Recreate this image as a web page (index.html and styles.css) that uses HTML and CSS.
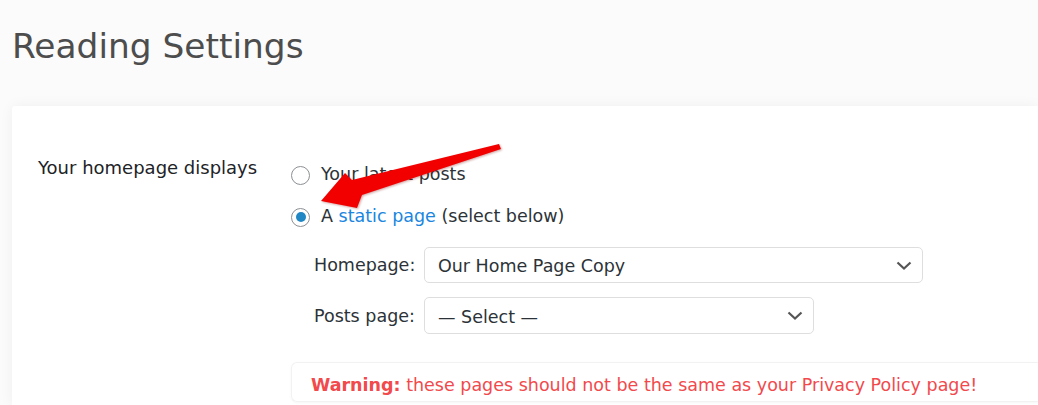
FILE: index.html
```html
<!DOCTYPE html>
<html lang="en">
<head>
<meta charset="utf-8">
<title>Reading Settings</title>
<link rel="stylesheet" href="styles.css">
</head>
<body>
<div class="page">
  <h1 class="title">Reading Settings</h1>
  <div class="card">
    <div class="row">
      <div class="row-label">Your homepage displays</div>
      <div class="row-field">
        <div class="radio"><span class="radio-dot"></span><span>Your latest posts</span></div>
        <div class="radio"><span class="radio-dot is-checked"></span><span>A <a class="link">static page</a> (select below)</span></div>
        <div class="sub">
          <div class="sub-row">
            <span class="sub-label">Homepage:</span>
            <div class="select select-wide"><span>Our Home Page Copy</span><svg class="chev" width="16" height="9" viewBox="0 0 16 9"><path d="M1.5 1.5 L8 7.5 L14.5 1.5" fill="none" stroke="#555" stroke-width="2.2"/></svg></div>
          </div>
          <div class="sub-row">
            <span class="sub-label">Posts page:</span>
            <div class="select select-narrow"><span>— Select —</span><svg class="chev" width="16" height="9" viewBox="0 0 16 9"><path d="M1.5 1.5 L8 7.5 L14.5 1.5" fill="none" stroke="#555" stroke-width="2.2"/></svg></div>
          </div>
        </div>
        <div class="warning"><strong>Warning:</strong> these pages should not be the same as your Privacy Policy page!</div>
      </div>
    </div>
  </div>
</div>
<svg class="arrow" width="1038" height="405" viewBox="0 0 1038 405">
  <polygon points="321,201 345,173 352,180 499,144 501,149 362,195 357,208" fill="#f20000"/>
</svg>
</body>
</html>
```

FILE: styles.css
```css
* { box-sizing: border-box; }
html, body { margin: 0; padding: 0; }
body {
  background: #fbfbfb;
  font-family: "DejaVu Sans", "Noto Sans", sans-serif;
  font-size: 17.5px;
  color: #2c3338;
  width: 1038px;
  height: 405px;
  overflow: hidden;
  position: relative;
}
.page { padding-left: 12px; }
.title {
  margin: 0;
  padding-top: 24px;
  font-size: 34.4px;
  line-height: 44px;
  font-weight: 400;
  color: #4d4d4d;
}
.card {
  margin-top: 38px;
  background: #fff;
  box-shadow: 0 0 14px rgba(0,0,0,0.05);
  padding: 50px 0 0 26px;
  border-radius: 3px 0 0 0;
  height: 300px;
}
.row { display: grid; grid-template-columns: 253px 1fr; }
.row-label { font-size: 18px; line-height: 24px; color: #1d2327; }
.row-field { padding-top: 6px; }
.radio {
  display: flex;
  align-items: center;
  height: 24px;
  line-height: 24px;
  margin-bottom: 18px;
}
.radio:last-of-type { margin-bottom: 0; }
.radio-dot {
  width: 19px;
  height: 19px;
  border-radius: 50%;
  border: 1px solid #8c8f94;
  background: #fff;
  margin-right: 11px;
  position: relative;
  top: 1px;
  flex: none;
}
.radio-dot.is-checked::after {
  content: "";
  position: absolute;
  left: 3.5px;
  top: 3.5px;
  width: 10px;
  height: 10px;
  border-radius: 50%;
  background: #2186c4;
}
.link { color: #1a86df; text-decoration: none; }
.sub { padding-left: 23px; margin-top: 19px; display: flex; flex-direction: column; gap: 14px; }
.sub-row { display: flex; align-items: center; }
.sub-label { width: 110px; line-height: 24px; flex: none; }
.select {
  height: 36px;
  border: 1px solid #dedede;
  border-radius: 5px;
  background: #fff;
  display: flex;
  align-items: center;
  justify-content: space-between;
  padding: 0 10px 0 13px;
  color: #2c3338;
}
.select span { position: relative; top: 1px; }
.select-wide { width: 499px; }
.select-narrow { width: 390px; height: 37px; }
.chev { display: block; }
.warning {
  margin-top: 28px;
  border: 1px solid #f2f2f2;
  border-right: 0;
  border-radius: 6px 0 0 6px;
  box-shadow: 0 1px 3px rgba(0,0,0,0.04);
  padding: 10px 0 4px 19px;
  line-height: 24px;
  color: #f2494c;
}
.warning strong { font-weight: 700; }
.arrow { position: absolute; left: 0; top: 0; pointer-events: none; filter: drop-shadow(1px 1px 1px rgba(120,0,0,0.35)); }
```
